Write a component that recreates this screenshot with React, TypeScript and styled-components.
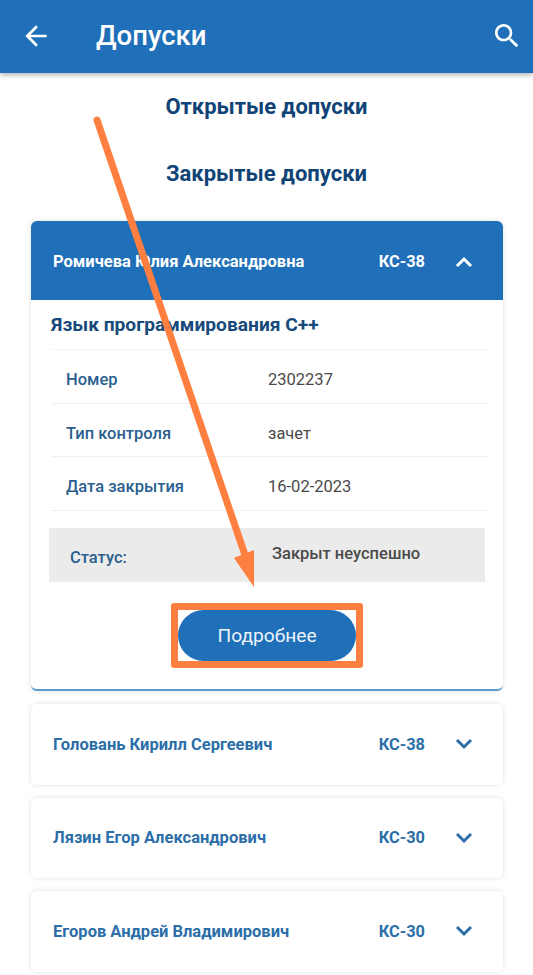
import styled, { createGlobalStyle } from "styled-components";

const GlobalStyle = createGlobalStyle`
  html, body {
    margin: 0;
    padding: 0;
    background-color: #ffffff;
    font-family: Roboto, "Noto Sans", sans-serif;
  }
`;

const Page = styled("div")`
  position: relative;
  width: 533px;
  height: 975px;
  overflow: hidden;
  background-color: #ffffff;
`;

const Header = styled("header")`
  display: flex;
  align-items: center;
  height: 73px;
  padding: 0 10px 2px 20px;
  box-sizing: border-box;
  background-color: #1f70b8;
  box-shadow: 0 2px 5px rgba(0, 0, 0, 0.3);
  color: #ffffff;
`;

const HeaderTitle = styled("h1")`
  flex: auto;
  margin: 0 0 0 44px;
  font-size: 27.5px;
  font-weight: 500;
`;

const Tab = styled("div")`
  height: 67px;
  line-height: 67px;
  text-align: center;
  font-size: 22px;
  font-weight: 700;
  color: #104476;
`;

const Tabs = styled("nav")`
  margin-bottom: 14px;
`;

const Accordion = styled("div")`
  display: flex;
  flex-direction: column;
  gap: 13px;
  margin: 0 30px 0 31px;
`;

const Card = styled("section")<{ $open?: boolean }>`
  border-radius: 6px;
  overflow: hidden;
  background-color: #ffffff;
  box-shadow: 0 0 5px rgba(0, 0, 0, 0.13);
  ${(p) => p.$open && "border-bottom: 2px solid #5b9bd0;"}
`;

const CardHead = styled("div")<{ $open?: boolean }>`
  display: flex;
  align-items: center;
  box-sizing: border-box;
  height: ${(p) => (p.$open ? 79 : 80.5)}px;
  padding: ${(p) => (p.$open ? 2 : 0)}px 30px 0 22px;
  font-size: 16.5px;
  font-weight: 700;
  background-color: ${(p) => (p.$open ? "#1f70b8" : "#ffffff")};
  color: ${(p) => (p.$open ? "#ffffff" : "#2b6ea8")};
`;

const Name = styled("span")`
  flex: auto;
`;

const Group = styled("span")`
  margin-right: 30px;
  font-size: 16.4px;
`;

const CardBody = styled("div")`
  display: flex;
  flex-direction: column;
  padding: 0 14px 21px 20px;
`;

const Subject = styled("div")`
  height: 49px;
  line-height: 49px;
  font-size: 19.2px;
  font-weight: 700;
  color: #174a7a;
  border-bottom: 1px solid #f1f3f5;
`;

const Row = styled("div")`
  display: grid;
  grid-template-columns: 202px 1fr;
  align-items: center;
  height: 46.7px;
  padding: 6px 0 0 15px;
  font-size: 16.5px;
  border-bottom: 1px solid #eef1f4;
`;

const Label = styled("span")`
  font-weight: 500;
  color: #2a5f8f;
`;

const Value = styled("span")`
  color: #4a4a4a;
`;

const Status = styled("div")`
  display: grid;
  grid-template-columns: 202px 1fr;
  height: 54px;
  margin: 17px 4px 0 -2px;
  padding-left: 21px;
  font-size: 16.5px;
  background-color: #ebebeb;
`;

const StatusLabel = styled(Label)`
  line-height: 60px;
`;

const StatusValue = styled(Value)`
  line-height: 52px;
  font-weight: 500;
`;

const Highlight = styled("div")`
  align-self: center;
  margin: 21px 0 0 -6px;
  border: 7px solid #ff7f40;
  border-radius: 3px;
  background-color: #ffffff;
`;

const Button = styled("button")`
  display: block;
  width: 178px;
  height: 51px;
  border: none;
  border-radius: 26px;
  background-color: #1f70b8;
  color: #ecf3fa;
  font-family: inherit;
  font-size: 19.2px;
`;

const Overlay = styled("svg")`
  position: absolute;
  top: 0;
  left: 0;
  pointer-events: none;
`;

const BackIcon = () => (
  <svg width="32" height="32" viewBox="0 0 24 24" fill="#ffffff">
    <path d="M20 11H7.83l5.59-5.59L12 4l-8 8 8 8 1.41-1.41L7.83 13H20v-2z" />
  </svg>
);

const SearchIcon = () => (
  <svg width="32" height="32" viewBox="0 0 24 24" fill="#ffffff">
    <path d="M15.5 14h-.79l-.28-.27C15.41 12.59 16 11.11 16 9.5 16 5.91 13.09 3 9.5 3S3 5.91 3 9.5 5.91 16 9.5 16c1.61 0 3.09-.59 4.23-1.57l.27.28v.79l5 4.99L20.49 19l-4.99-5zm-6 0C7.01 14 5 11.99 5 9.5S7.01 5 9.5 5 14 7.01 14 9.5 11.99 14 9.5 14z" />
  </svg>
);

const Chevron = ({ up }: { up?: boolean }) => (
  <svg width="18" height="12" viewBox="0 0 18 12" fill="none">
    <path
      d={up ? "M2 10l7-7 7 7" : "M2 2l7 7 7-7"}
      stroke="currentColor"
      strokeWidth="3"
    />
  </svg>
);

const rows = [
  ["Номер", "2302237"],
  ["Тип контроля", "зачет"],
  ["Дата закрытия", "16-02-2023"],
];

const students = [
  ["Головань Кирилл Сергеевич", "КС-38"],
  ["Лязин Егор Александрович", "КС-30"],
  ["Егоров Андрей Владимирович", "КС-30"],
];

export default function App() {
  return (
    <Page>
      <GlobalStyle />
      <Header>
        <BackIcon />
        <HeaderTitle>Допуски</HeaderTitle>
        <SearchIcon />
      </Header>
      <Tabs>
        <Tab>Открытые допуски</Tab>
        <Tab>Закрытые допуски</Tab>
      </Tabs>
      <Accordion>
        <Card $open>
          <CardHead $open>
            <Name>Ромичева Юлия Александровна</Name>
            <Group>КС-38</Group>
            <Chevron up />
          </CardHead>
          <CardBody>
            <Subject>Язык программирования С++</Subject>
            {rows.map(([label, value]) => (
              <Row key={label}>
                <Label>{label}</Label>
                <Value>{value}</Value>
              </Row>
            ))}
            <Status>
              <StatusLabel>Статус:</StatusLabel>
              <StatusValue>Закрыт неуспешно</StatusValue>
            </Status>
            <Highlight>
              <Button>Подробнее</Button>
            </Highlight>
          </CardBody>
        </Card>
        {students.map(([name, group]) => (
          <Card key={name}>
            <CardHead>
              <Name>{name}</Name>
              <Group>{group}</Group>
              <Chevron />
            </CardHead>
          </Card>
        ))}
      </Accordion>
      <Overlay width="533" height="975" viewBox="0 0 533 975">
        <path d="M97 120L245 555" stroke="#ff7f40" strokeWidth="7" strokeLinecap="round" />
        <path d="M234 558L254 550V587z" fill="#ff7f40" />
      </Overlay>
    </Page>
  );
}
